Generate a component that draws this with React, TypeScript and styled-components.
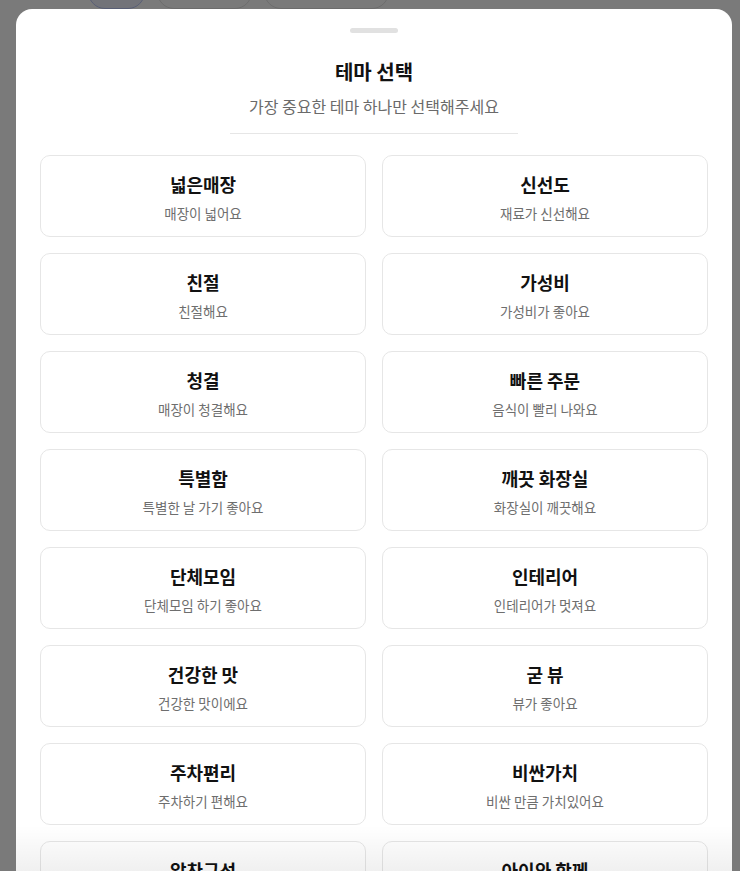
import React, { FC } from 'react';
import styled, { createGlobalStyle } from 'styled-components';

interface Theme {
  id: number;
  name: string;
  desc: string;
}

const THEMES: Theme[] = [
  { id: 1, name: '넓은매장', desc: '매장이 넓어요' },
  { id: 2, name: '신선도', desc: '재료가 신선해요' },
  { id: 3, name: '친절', desc: '친절해요' },
  { id: 4, name: '가성비', desc: '가성비가 좋아요' },
  { id: 5, name: '청결', desc: '매장이 청결해요' },
  { id: 6, name: '빠른 주문', desc: '음식이 빨리 나와요' },
  { id: 7, name: '특별함', desc: '특별한 날 가기 좋아요' },
  { id: 8, name: '깨끗 화장실', desc: '화장실이 깨끗해요' },
  { id: 9, name: '단체모임', desc: '단체모임 하기 좋아요' },
  { id: 10, name: '인테리어', desc: '인테리어가 멋져요' },
  { id: 11, name: '건강한 맛', desc: '건강한 맛이에요' },
  { id: 12, name: '굳 뷰', desc: '뷰가 좋아요' },
  { id: 13, name: '주차편리', desc: '주차하기 편해요' },
  { id: 14, name: '비싼가치', desc: '비싼 만큼 가치있어요' },
  { id: 15, name: '알찬구성', desc: '구성이 알차요' },
  { id: 16, name: '아이와 함께', desc: '아이와 가기 좋아요' },
];

const CHIPS = [
  { id: 1, label: '12', active: true, width: 57 },
  { id: 2, label: '영업중 ∨', active: false, width: 95 },
  { id: 3, label: '가격대 설정 ∨', active: false, width: 125 },
];

const GlobalStyle = createGlobalStyle`
  html, body {
    margin: 0;
    height: 100%;
    overflow: hidden;
    background: #fff;
  }
  body {
    font-family: 'Noto Sans CJK KR', 'Noto Sans', sans-serif;
    -webkit-font-smoothing: antialiased;
  }
  * {
    box-sizing: border-box;
  }
`;

const ThemeSheet: FC = () => {
  return (
    <>
      <GlobalStyle />
      <ChipBar>
        {CHIPS.map((chip) => (
          <Chip key={chip.id} $active={chip.active} style={{ width: chip.width }}>
            {chip.label}
          </Chip>
        ))}
      </ChipBar>
      <Dim>
        <Sheet>
          <Handle />
          <Title>테마 선택</Title>
          <Subtitle>가장 중요한 테마 하나만 선택해주세요</Subtitle>
          <Divider />
          <Grid>
            {THEMES.map((theme) => (
              <Card key={theme.id} type="button">
                <CardTitle>{theme.name}</CardTitle>
                <CardDesc>{theme.desc}</CardDesc>
              </Card>
            ))}
          </Grid>
          <BottomFade />
        </Sheet>
      </Dim>
    </>
  );
};

const ChipBar = styled.div`
  display: flex;
  gap: 12px;
  padding-left: 88px;
  margin-top: -25px;
`;

const Chip = styled.div<{ $active: boolean }>`
  height: 34px;
  border-radius: 17px;
  border: 1px solid ${({ $active }) => ($active ? '#b9c4f5' : '#e2e2e2')};
  background: ${({ $active }) => ($active ? '#eef1fd' : '#fff')};
  color: ${({ $active }) => ($active ? '#3350e0' : '#333')};
  font-size: 14px;
  display: flex;
  align-items: center;
  justify-content: center;
`;

const Dim = styled.div`
  position: fixed;
  inset: 0;
  background: rgba(0, 0, 0, 0.52);
  padding: 9px 8px 0 16px;
`;

const Sheet = styled.div`
  position: relative;
  height: 100%;
  overflow: hidden;
  background: #fff;
  border-radius: 16px 16px 0 0;
  padding: 19px 24px 0;
`;

const Handle = styled.div`
  width: 48px;
  height: 5px;
  border-radius: 3px;
  background: #e1e1e1;
  margin: 0 auto;
`;

const Title = styled.h2`
  margin: 25px 0 0;
  text-align: center;
  font-size: 20px;
  line-height: 28px;
  font-weight: 700;
  color: #111;
`;

const Subtitle = styled.p`
  margin: 8px 0 0;
  text-align: center;
  font-size: 16px;
  line-height: 24px;
  color: #6a6a6a;
`;

const Divider = styled.hr`
  width: 288px;
  margin: 15px auto 0;
  border: 0;
  border-top: 1px solid #e6e6e6;
`;

const Grid = styled.div`
  display: grid;
  grid-template-columns: 1fr 1fr;
  gap: 16px;
  margin-top: 21px;
`;

const Card = styled.button`
  height: 82px;
  border: 1px solid #e6e6e6;
  border-radius: 10px;
  background: #fff;
  padding: 15px 8px 0;
  display: flex;
  flex-direction: column;
  align-items: center;
  font-family: inherit;
  cursor: pointer;
`;

const CardTitle = styled.span`
  font-size: 18px;
  line-height: 26px;
  font-weight: 700;
  color: #111;
`;

const CardDesc = styled.span`
  margin-top: 6px;
  font-size: 13.5px;
  line-height: 20px;
  color: #6e6e6e;
`;

const BottomFade = styled.div`
  position: absolute;
  left: 0;
  right: 0;
  bottom: 0;
  height: 46px;
  pointer-events: none;
  background: linear-gradient(
    to bottom,
    rgba(0, 0, 0, 0),
    rgba(0, 0, 0, 0.06)
  );
`;

export default ThemeSheet;
